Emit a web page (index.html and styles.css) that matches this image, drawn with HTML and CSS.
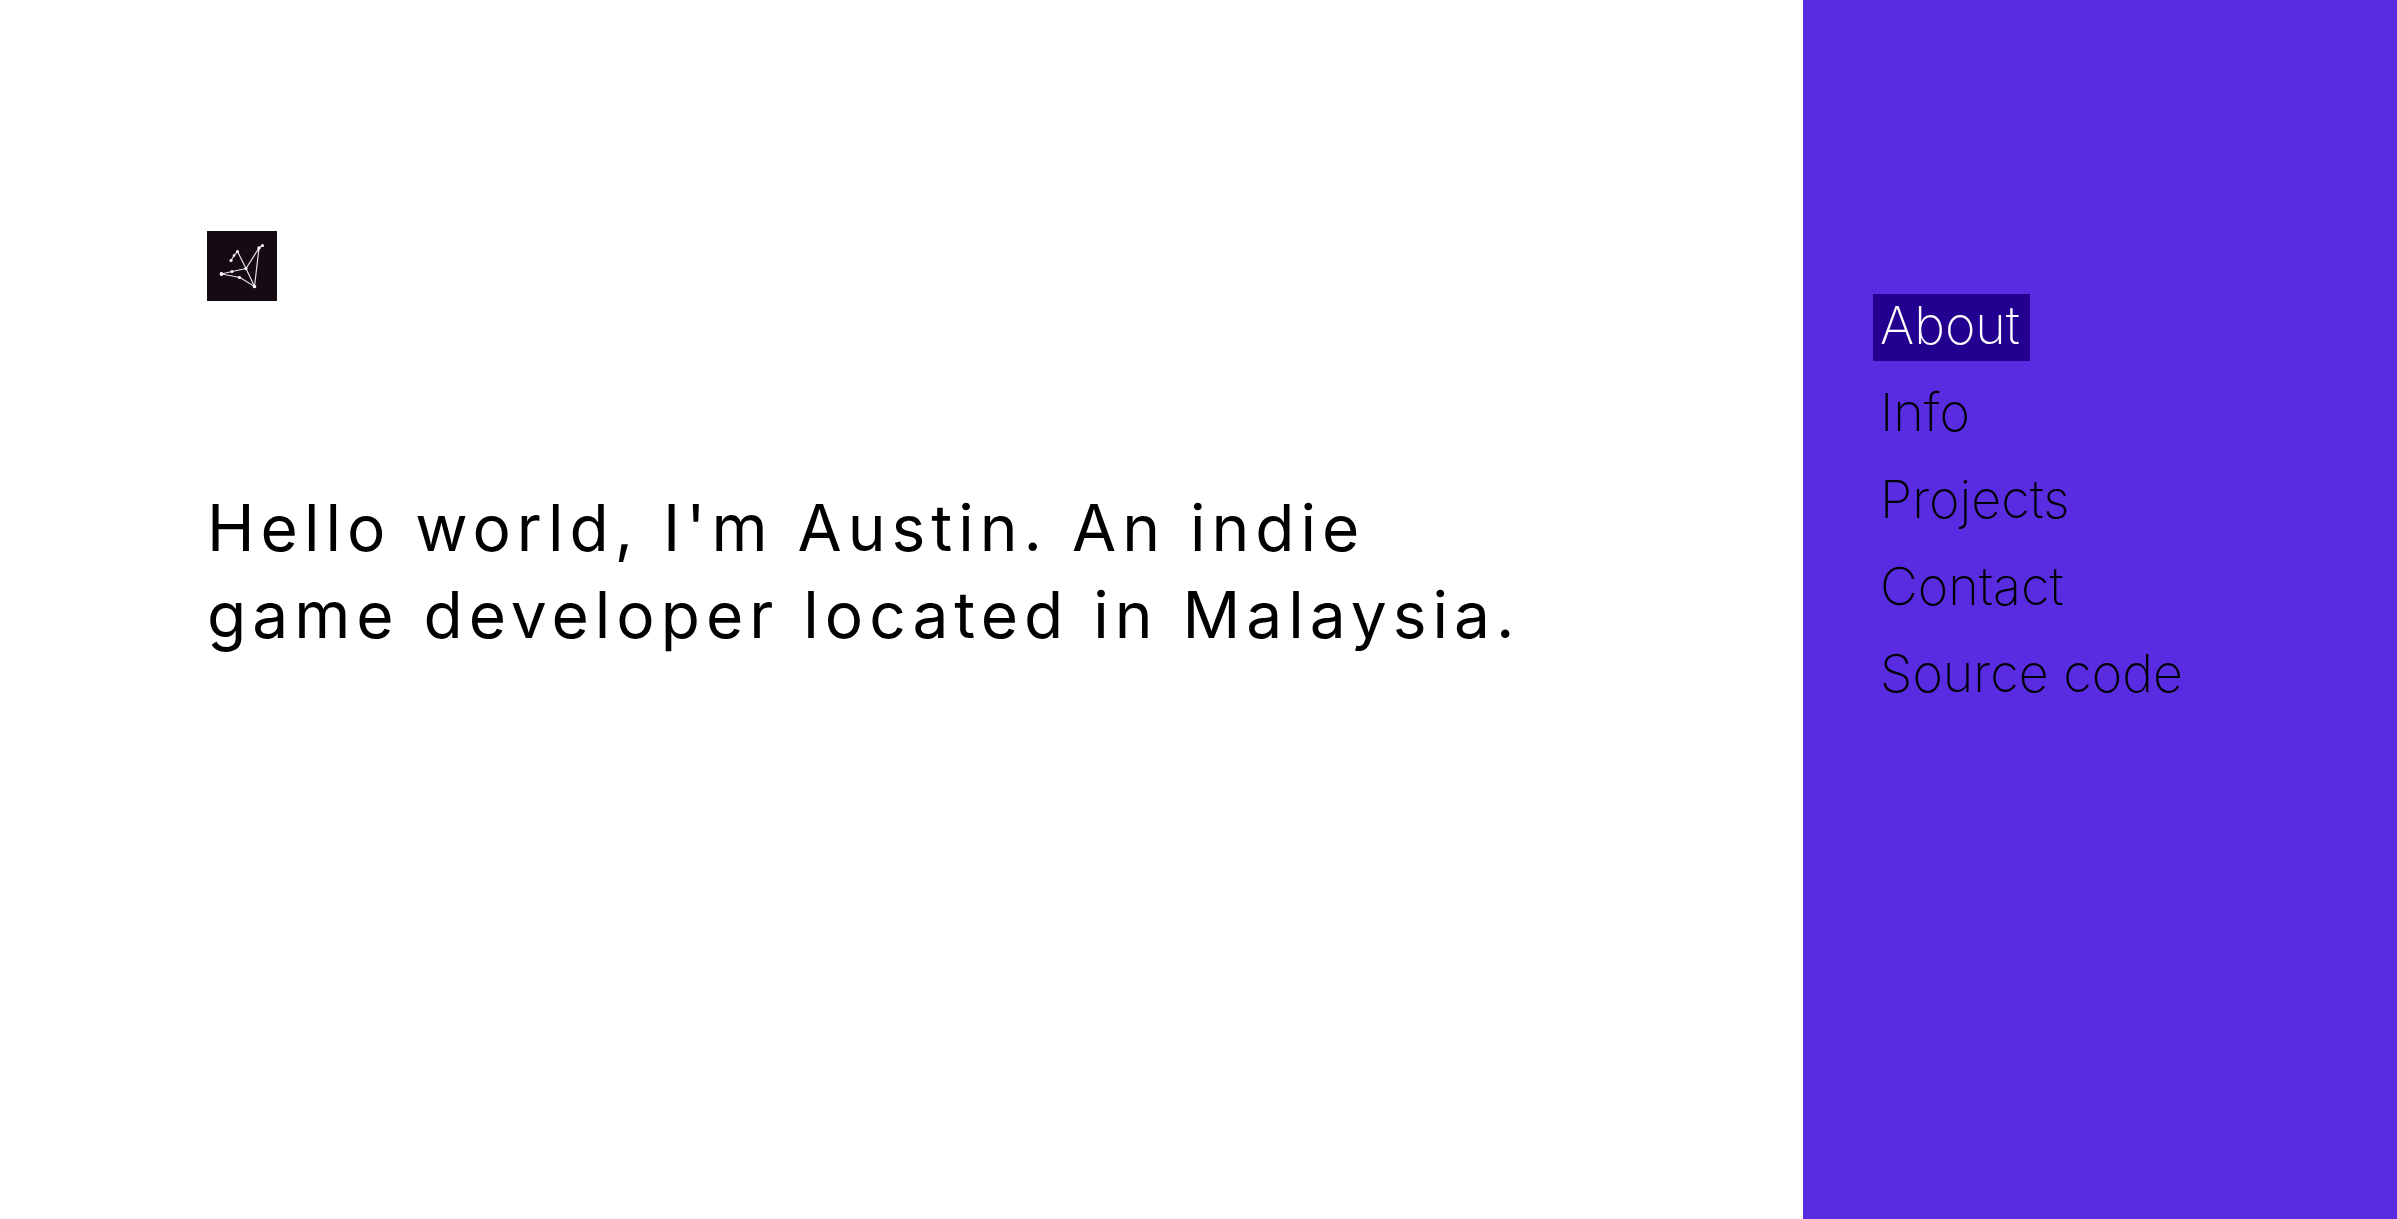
FILE: index.html
```html
<!DOCTYPE html>
<html lang="en">
<head>
<meta charset="utf-8">
<meta name="viewport" content="width=device-width, initial-scale=1">
<title>Austin</title>
<link rel="stylesheet" href="styles.css">
</head>
<body>
<div class="layout">
  <main class="content">
    <svg class="logo" viewBox="0 0 70 70" role="img" aria-label="Austin logo">
      <rect width="70" height="70" fill="#160b14"/>
      <g fill="none" stroke="#e4e0e3" stroke-width="1.200">
        <path d="M24 29.500L27 24.500L30.500 20.500L39 37.500L47.500 55.500L33 46.500L14.500 43L25 40.500L39 37.500L52 17L55.500 14.500M52 17L47.500 55.500"/>
      </g>
      <g fill="#fff">
        <circle cx="24" cy="29.500" r="1.600"/>
        <circle cx="27" cy="24.500" r="1.300"/>
        <circle cx="30.500" cy="20.500" r="1.500"/>
        <circle cx="39" cy="37.500" r="1.500"/>
        <circle cx="47.500" cy="55.500" r="1.800"/>
        <circle cx="32.500" cy="46.500" r="1.600"/>
        <circle cx="14.500" cy="43" r="1.900"/>
        <circle cx="25" cy="40.500" r="1.500"/>
        <circle cx="52" cy="17" r="1.700"/>
        <circle cx="55.500" cy="14.500" r="1.500"/>
      </g>
    </svg>
    <h1 class="intro">Hello world, I'm Austin. An indie game developer located in Malaysia.</h1>
  </main>
  <nav class="sidebar" aria-label="Main">
    <ul class="menu">
      <li class="menu-item"><a class="menu-link menu-link-active" href="#about" aria-current="page">About</a></li>
      <li class="menu-item"><a class="menu-link" href="#info">Info</a></li>
      <li class="menu-item"><a class="menu-link" href="#projects">Projects</a></li>
      <li class="menu-item"><a class="menu-link" href="#contact">Contact</a></li>
      <li class="menu-item"><a class="menu-link" href="#source">Source code</a></li>
    </ul>
  </nav>
</div>
</body>
</html>
```
FILE: styles.css
```css
* {
  box-sizing: border-box;
}

body {
  margin: 0;
  background: #fff;
  color: #000;
  font-family: Inter, "Liberation Sans", sans-serif;
}

.layout {
  display: grid;
  grid-template-columns: minmax(0, 1fr) 24.78%;
  min-height: 100vh;
}

.content {
  padding: 231px 70px 70px 207px;
}

.logo {
  display: block;
  width: 70px;
  height: 70px;
}

.intro {
  max-width: 1340px;
  margin: 183px 0 0;
  font-size: 64px;
  font-weight: 400;
  line-height: 87px;
  letter-spacing: 6px;
}

.sidebar {
  padding: 294px 70px 70px;
  background: #592be1;
}

.menu {
  display: flex;
  flex-direction: column;
  align-items: flex-start;
  gap: 20px;
  margin: 0;
  padding: 0;
  list-style: none;
}

.menu-link {
  display: block;
  padding: 0 10px 4px 7px;
  color: #000;
  font-size: 52px;
  font-weight: 200;
  line-height: 63px;
  text-decoration: none;
}

.menu-link-active {
  background: #240090;
  color: #fff;
}
```
